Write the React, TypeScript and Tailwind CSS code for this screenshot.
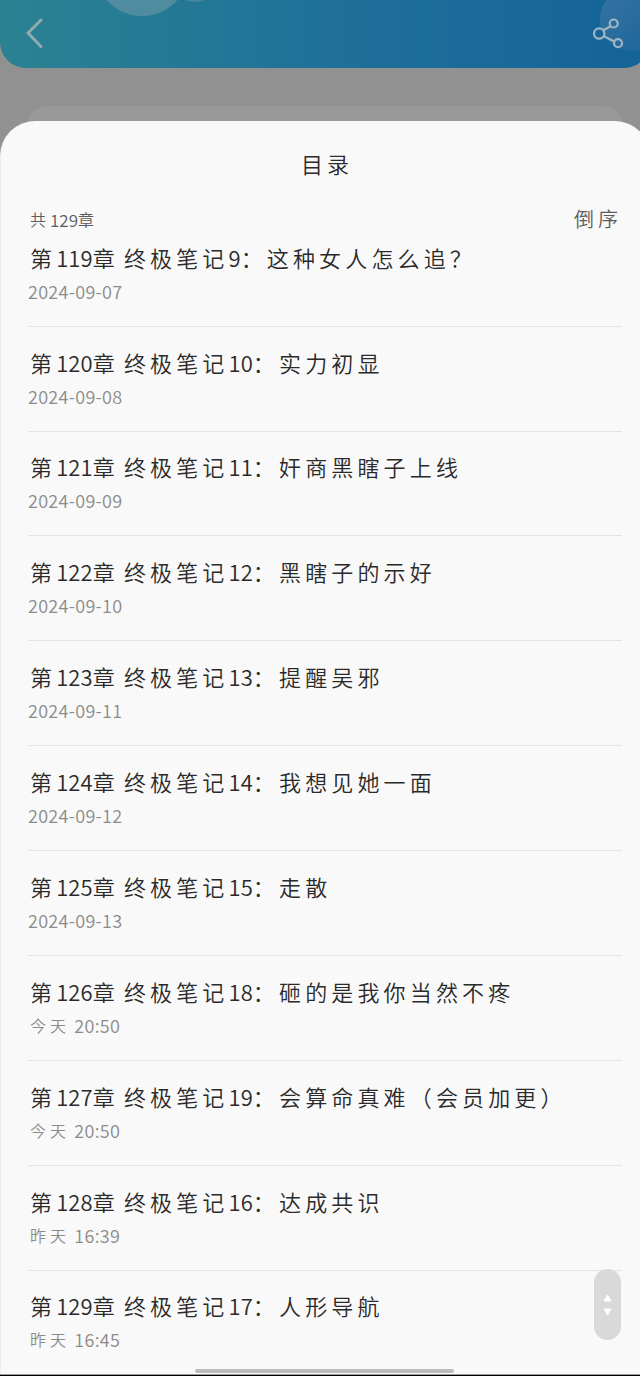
const chapters = [
  { title: "第119章 终极笔记9：这种女人怎么追？", date: "2024-09-07" },
  { title: "第120章 终极笔记10：实力初显", date: "2024-09-08" },
  { title: "第121章 终极笔记11：奸商黑瞎子上线", date: "2024-09-09" },
  { title: "第122章 终极笔记12：黑瞎子的示好", date: "2024-09-10" },
  { title: "第123章 终极笔记13：提醒吴邪", date: "2024-09-11" },
  { title: "第124章 终极笔记14：我想见她一面", date: "2024-09-12" },
  { title: "第125章 终极笔记15：走散", date: "2024-09-13" },
  { title: "第126章 终极笔记18：砸的是我你当然不疼", date: "今天 20:50" },
  { title: "第127章 终极笔记19：会算命真难（会员加更）", date: "今天 20:50" },
  { title: "第128章 终极笔记16：达成共识", date: "昨天 16:39" },
  { title: "第129章 终极笔记17：人形导航", date: "昨天 16:45" },
];

// Chinese runs are spaced out, digits stay tight
function MixedText({ text, cjk }: { text: string; cjk: string }) {
  return text.split(/([\x20-\x7e]+)/).map((part, i) => (
    <span key={i} className={i % 2 ? "" : cjk}>
      {part}
    </span>
  ));
}

function Header() {
  return (
    <header className="relative flex h-[68px] items-center justify-between overflow-hidden rounded-b-[26px] bg-linear-to-r from-[#2b8292] via-[#1f7199] to-[#146399] pl-[25px] pr-[26px]">
      <div className="absolute -top-[78px] left-[95px] size-[94px] rounded-full bg-[#4f8c9f]" />
      <div className="absolute -top-[50px] left-[169px] size-[52px] rounded-full bg-[#4586a1]" />
      <div className="absolute -top-[12px] left-[600px] size-[63px] rounded-full bg-linear-to-br from-[#3574a2] to-[#1b649a]" />
      <svg
        className="relative h-8 w-5"
        viewBox="0 0 20 32"
        fill="none"
        stroke="#91abb0"
        strokeWidth="3"
        strokeLinecap="round"
        strokeLinejoin="round"
      >
        <path d="M16 2 3 15 16 28.5" />
      </svg>
      <svg
        className="relative h-8 w-8"
        viewBox="0 0 32 32"
        fill="none"
        stroke="#a0b5c3"
        strokeWidth="2.2"
      >
        <circle cx="7.2" cy="15.5" r="5.2" />
        <circle cx="21.7" cy="5.5" r="4" />
        <circle cx="26" cy="25.2" r="4" />
        <path d="M11.2 12.2 18.6 8.2M11.8 18.2 22.4 23.4" />
      </svg>
    </header>
  );
}

function ChapterRow({ title, date }: { title: string; date: string }) {
  return (
    <li className="flex h-[104.87px] flex-col justify-end border-b border-[#e4e4e4] pb-[18px] last:border-transparent">
      <p className="flex h-[34px] items-center whitespace-pre pl-[2px] text-[22px] leading-none tracking-[0.1px] text-[#2a2a2a]">
        <MixedText text={title} cjk="tracking-[4.15px]" />
      </p>
      <p className="flex h-[34px] items-center whitespace-pre text-[18px] leading-none tracking-[0.3px] text-[#8b8b8b]">
        <MixedText text={date} cjk="pl-[2px] text-[16px] tracking-[4px] empty:hidden" />
      </p>
    </li>
  );
}

export default function App() {
  return (
    <div className="relative h-[1376px] w-[640px] overflow-hidden bg-[#919191] font-['Noto_Sans_CJK_SC',sans-serif] font-[350]">
      <div className="flex h-full w-[650px] flex-col">
        <Header />
        <div className="mx-7 mt-[38px] h-[15px] shrink-0 rounded-t-[22px_15px] bg-[#999999]" />
        <main className="min-h-0 flex-1 overflow-hidden rounded-t-[35px] border-l border-[#eeeeee] bg-[#f9f9f9] pl-[27px] pr-7">
          <h1 className="flex h-[84px] items-center justify-center pl-[4px] text-[22px] tracking-[4.1px] text-[#2a2a2a]">
            目录
          </h1>
          <div className="flex h-[28px] items-center justify-between pl-[2px] leading-none text-[#5c5c5c]">
            <p className="flex items-center text-[17px]">
              <MixedText text="共129章" cjk="text-[16px] tracking-[4px]" />
            </p>
            <button className="text-[20px] tracking-[4px]">倒序</button>
          </div>
          <ul className="-mt-[11.1px]">
            {chapters.map((c) => (
              <ChapterRow key={c.title} title={c.title} date={c.date} />
            ))}
          </ul>
        </main>
      </div>

      {/* drag handle for fast scrolling */}
      <div className="absolute left-[594px] top-[1269px] flex h-[71px] w-[27px] items-center justify-center rounded-full bg-[#d9d9d9]">
        <svg className="h-[22px] w-[9px]" viewBox="0 0 9 22" fill="#fff" stroke="#fff" strokeLinejoin="round">
          <path d="M4.5 1 8 7H1ZM4.5 21 1 15H8Z" />
        </svg>
      </div>
      <div className="absolute bottom-[3px] left-[195px] h-1 w-[259px] rounded-full bg-[#bcbcbc]" />
      <div className="absolute bottom-0 left-0 h-[2px] w-full border-t border-[#999999] bg-black" />
    </div>
  );
}
